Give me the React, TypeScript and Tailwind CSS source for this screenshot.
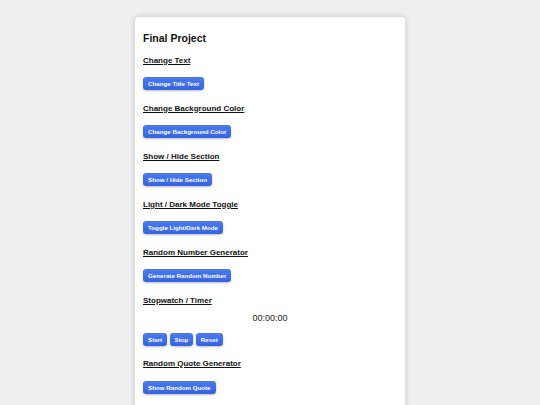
const sections = [
  { title: "Change Text", button: "Change Title Text" },
  { title: "Change Background Color", button: "Change Background Color" },
  { title: "Show / Hide Section", button: "Show / Hide Section" },
  { title: "Light / Dark Mode Toggle", button: "Toggle Light/Dark Mode" },
  { title: "Random Number Generator", button: "Generate Random Number" },
];

const Btn = ({ label }: { label: string }) => (
  <button className="h-[13px] px-[5px] rounded-[3px] bg-gradient-to-b from-[#4a7bf0] to-[#3563e0] text-white text-[6.2px] leading-[13px] font-bold shadow-[0_1px_2px_rgba(0,0,0,0.25)]">
    {label}
  </button>
);

const Heading = ({ children }: { children: React.ReactNode }) => (
  <h3 className="text-[8px] leading-[10px] font-bold underline underline-offset-[1px] text-[#111]">
    {children}
  </h3>
);

export default function App() {
  return (
    <div className="h-[405px] bg-[#efefef] pt-[17px] font-['Liberation_Sans',Arial,sans-serif] overflow-hidden">
      <div className="mx-auto w-[270px] min-h-[400px] bg-white rounded-[4px] shadow-[0_0_6px_rgba(0,0,0,0.18)] pt-[15px] px-[8px]">
        <h1 className="text-[10.5px] leading-[13px] font-bold text-[#111] mb-[10.5px]">Final Project</h1>

        {sections.map((s) => (
          <div key={s.title} className="mb-[14px]">
            <Heading>{s.title}</Heading>
            <div className="mt-[11px] flex">
              <Btn label={s.button} />
            </div>
          </div>
        ))}

        <div className="mb-[13px]">
          <Heading>Stopwatch / Timer</Heading>
          <p className="mt-[7px] text-center text-[9px] leading-[11px] text-[#222]">00:00:00</p>
          <div className="mt-[9px] flex gap-[2.5px]">
            <Btn label="Start" />
            <Btn label="Stop" />
            <Btn label="Reset" />
          </div>
        </div>

        <div>
          <Heading>Random Quote Generator</Heading>
          <div className="mt-[12px] flex">
            <Btn label="Show Random Quote" />
          </div>
        </div>
      </div>
    </div>
  );
}
